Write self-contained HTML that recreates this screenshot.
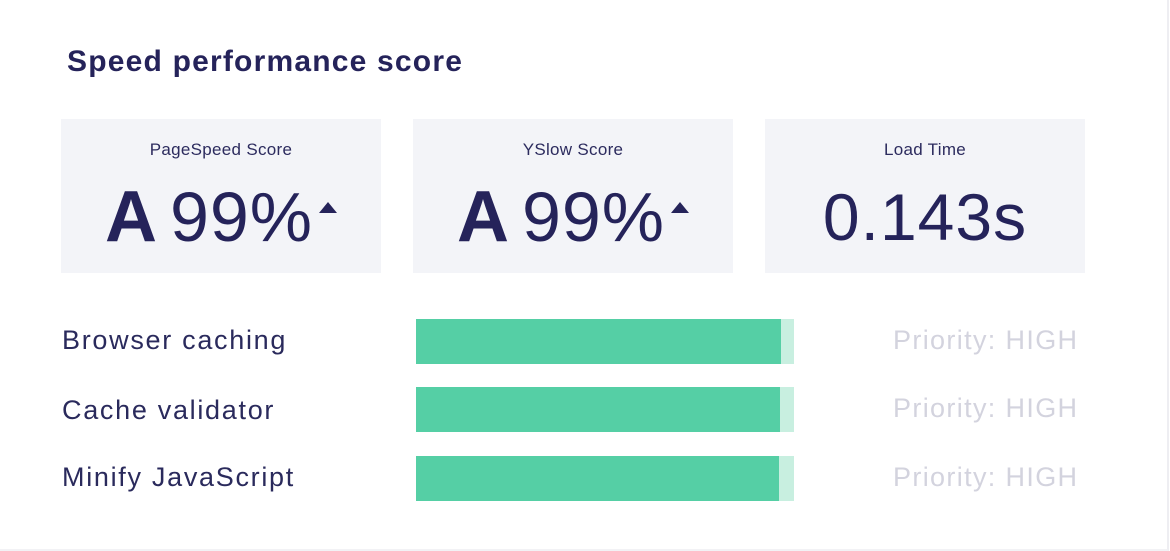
<!DOCTYPE html>
<html><head><style>
body{margin:0;width:1170px;height:551px;background:#fff;font-family:"Liberation Sans",sans-serif;position:relative;overflow:hidden;color:#27255c}
.frame{position:absolute;left:0;top:0;width:1167px;height:549px;border-right:2px solid #eeeef2;border-bottom:2px solid #f2f2f5}
h1{position:absolute;left:67px;top:45px;margin:0;font-size:30px;font-weight:bold;color:#25235a;letter-spacing:1.2px}
.box{position:absolute;top:119px;width:320px;height:154px;background:#f3f4f8;text-align:center}
.lab{position:absolute;top:21px;left:0;right:0;font-size:17px;color:#2c2b5e;letter-spacing:0.3px}
.big{position:absolute;top:57px;left:0;right:0;font-size:70px;color:#25235a;white-space:nowrap;letter-spacing:1px}
.big b{font-size:72px;margin-right:12px}
.tri{display:inline-block;width:0;height:0;border-left:9px solid transparent;border-right:9px solid transparent;border-bottom:11px solid #25235a;vertical-align:28px;margin-left:6px}
.rl{position:absolute;left:62px;font-size:27px;color:#2a2a5c;letter-spacing:1.7px}
.bar{position:absolute;left:416px;width:378px;height:45px;background:#c8efe0}
.bar i{position:absolute;left:0;top:0;bottom:0;background:#55cfa5}
.pr{position:absolute;left:893px;font-size:27px;color:#d3d3de;letter-spacing:1.35px}
</style></head><body>
<div class="frame"></div>
<h1>Speed performance score</h1>
<div class="box" style="left:61px"><div class="lab">PageSpeed Score</div><div class="big"><b>A</b>99%<span class="tri"></span></div></div>
<div class="box" style="left:413px"><div class="lab">YSlow Score</div><div class="big"><b>A</b>99%<span class="tri"></span></div></div>
<div class="box" style="left:765px"><div class="lab">Load Time</div><div class="big" style="font-size:66px;top:60px">0.143s</div></div>
<div class="rl" style="top:325px">Browser caching</div><div class="bar" style="top:319px"><i style="width:365px"></i></div><div class="pr" style="top:325px">Priority: HIGH</div>
<div class="rl" style="top:395px">Cache validator</div><div class="bar" style="top:387px"><i style="width:364px"></i></div><div class="pr" style="top:393px">Priority: HIGH</div>
<div class="rl" style="top:462px">Minify JavaScript</div><div class="bar" style="top:456px"><i style="width:363px"></i></div><div class="pr" style="top:462px">Priority: HIGH</div>
</body></html>
